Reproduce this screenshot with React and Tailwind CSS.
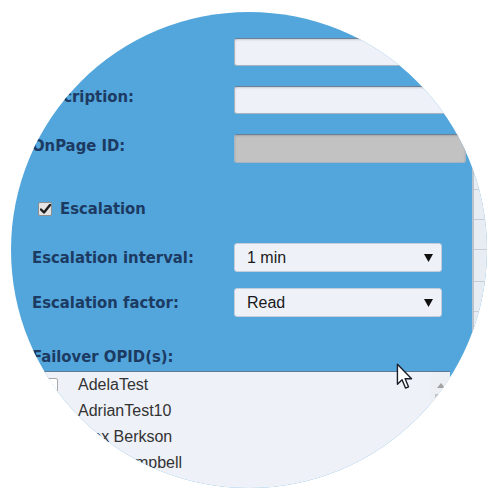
import React from 'react'

const people = ['AdelaTest', 'AdrianTest10', 'Alex Berkson', 'Amy Campbell']

const labelFont = { fontFamily: '"DejaVu Sans Condensed", "DejaVu Sans", Verdana, sans-serif' }

function Caret() {
  return (
    <svg width="9" height="8" viewBox="0 0 9 8" className="shrink-0">
      <path d="M0 0 L9 0 L4.5 8 Z" fill="#111" />
    </svg>
  )
}

function Label({ children, lift = true }) {
  return (
    <div className={`w-[234px] shrink-0 pl-[32px] font-bold text-[16.5px] leading-[18px] text-[#1c3a62] whitespace-nowrap ${lift ? 'pb-[6px]' : 'pt-[1px]'}`} style={labelFont}>
      {children}
    </div>
  )
}

function TextField({ gray }) {
  return (
    <div
      className={`w-[232px] shrink-0 rounded-[3px] border border-[#a7b4c2] border-t-[#6c8197] shadow-[inset_0_1px_2px_rgba(0,0,0,0.15)] ${gray ? 'bg-[#c2c2c2] h-[29px]' : 'bg-[#eef1f8] h-[28px]'}`}
    />
  )
}

function Select({ value }) {
  return (
    <div className="w-[208px] shrink-0 h-[29px] rounded-[3px] border border-[#c3ceda] bg-[#eef1f8] flex items-center justify-between pl-[12px] pr-[8px] text-[16px] text-[#1a1a1a]" style={{ fontFamily: '"Liberation Sans", Arial, sans-serif' }}>
      <span>{value}</span>
      <Caret />
    </div>
  )
}

export default function App() {
  return (
    <div className="w-[500px] h-[500px] bg-white relative overflow-hidden">
      <div className="absolute left-[11px] top-[12px] w-[476px] h-[476px] rounded-full overflow-hidden bg-[#53a6dc]">
        <div className="relative w-[500px] h-[500px] -ml-[11px] -mt-[12px] flex">
          {/* left form column */}
          <div className="w-[472px] shrink-0 flex flex-col pt-[38px]">
            <div className="flex items-center h-[28px]">
              <Label>Name:</Label>
              <TextField />
            </div>
            <div className="flex items-center h-[28px] mt-[20px]">
              <Label>Description:</Label>
              <TextField />
            </div>
            <div className="flex items-center h-[29px] mt-[20px]">
              <Label>OnPage ID:</Label>
              <TextField gray />
            </div>
            <div className="flex items-center h-[20px] mt-[36px] pl-[38px] gap-[8px]">
              <div className="w-[14px] h-[14px] border border-[#8d8d8d] bg-[#e4e4e4] rounded-[2px] flex items-center justify-center">
                <svg width="11" height="10" viewBox="0 0 11 10">
                  <path d="M1 5.5 L4 8.5 L10 1" fill="none" stroke="#1d1d1d" strokeWidth="2.4" strokeLinecap="round" strokeLinejoin="round" />
                </svg>
              </div>
              <span className="font-bold text-[16.5px] leading-[18px] text-[#1c3a62]" style={labelFont}>Escalation</span>
            </div>
            <div className="flex items-center h-[29px] mt-[24px]">
              <Label lift={false}>Escalation interval:</Label>
              <Select value="1 min" />
            </div>
            <div className="flex items-center h-[29px] mt-[16px]">
              <Label lift={false}>Escalation factor:</Label>
              <Select value="Read" />
            </div>
            <div className="h-[54px] flex items-end pb-[5px]">
              <Label lift={false}>Failover OPID(s):</Label>
            </div>
            {/* list */}
            <div className="relative w-[450px] flex-1 bg-[#eef1f7] border-t border-[#5d7894] text-[16px] text-[#333]" style={{ fontFamily: '"Liberation Sans", Arial, sans-serif' }}>
              {people.map((p) => (
                <div key={p} className="h-[26px] flex items-center">
                  <div className="ml-[44px] w-[14px] h-[14px] border border-[#a8a8a8] rounded-[2px] bg-white" />
                  <span className="ml-[20px]">{p}</span>
                </div>
              ))}
              <div className="absolute right-0 top-0 bottom-0 w-[19px] bg-[#eceff3] flex flex-col items-center pt-[11px] gap-[6px]">
                <svg width="8" height="5" viewBox="0 0 8 5">
                  <path d="M0 5 L4 0 L8 5 Z" fill="#a3a3a3" />
                </svg>
                <div className="w-[8px] h-[40px] bg-[#c4c4c4] mr-[4px]" />
              </div>
            </div>
          </div>
          {/* right panel */}
          <div className="flex-1 mt-[168px] bg-[#e8edf3] border-l-2 border-[#b9c3ce]">
            <div className="h-[22px] border-b border-[#c6ced7]" />
            <div className="h-[30px] border-b border-[#c6ced7]" />
            <div className="h-[30px] border-b border-[#c6ced7]" />
            <div className="h-[32px] border-b border-[#c6ced7]" />
            <div className="h-[30px] border-b border-[#c6ced7]" />
          </div>
          {/* pointer */}
          <svg className="absolute left-[396px] top-[363px]" width="17" height="27" viewBox="0 0 13 21">
            <path d="M1 1 L1 16.5 L4.6 13 L7.3 19.5 L9.6 18.5 L7 12.2 L12 12.2 Z" fill="#fff" stroke="#1a1f2a" strokeWidth="1.1" strokeLinejoin="round" />
          </svg>
        </div>
      </div>
    </div>
  )
}
